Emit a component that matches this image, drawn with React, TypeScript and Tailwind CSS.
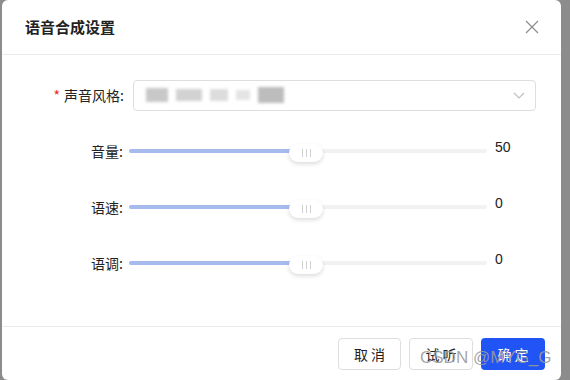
const FONT = { fontFamily: '"Noto Sans CJK SC", "Noto Sans", sans-serif' }

const SLIDERS = [
  { label: '音量', value: 50 },
  { label: '语速', value: 0 },
  { label: '语调', value: 0 },
]

function Slider() {
  return (
    <div className="relative flex h-[22px] w-[358px] items-center">
      <div className="h-[4px] w-full rounded-full bg-[#f2f2f2]" />
      <div className="absolute left-0 top-[9px] h-[4px] w-[166px] rounded-full bg-[#a6baee]" />
      <div className="absolute left-[160px] top-[4px] flex h-[18px] w-[34px] items-center justify-center gap-[3px] rounded-full bg-white shadow-[0_2px_4px_rgba(0,0,0,0.14)]">
        <span className="h-[8px] w-px bg-[#d0d0d0]" />
        <span className="h-[8px] w-px bg-[#d0d0d0]" />
        <span className="h-[8px] w-px bg-[#d0d0d0]" />
      </div>
    </div>
  )
}

export default function App() {
  return (
    <div className="relative flex h-[380px] w-[570px] bg-[#8c8c8c]" style={FONT}>
      <div className="ml-[2px] flex h-full w-[559px] flex-col rounded-[6px] bg-white text-[#222]">
        <div className="flex h-[55px] items-center justify-between border-b border-[#ebebeb] pl-[23px] pr-[22px]">
          <span className="text-[15px] font-bold">语音合成设置</span>
          <svg width="14" height="14" viewBox="0 0 14 14" className="text-[#8c8c8c]">
            <path d="M1 1L13 13M13 1L1 13" stroke="currentColor" strokeWidth="1.2" />
          </svg>
        </div>

        <div className="flex flex-1 flex-col gap-6 pt-[24px]">
          <div className="flex h-[32px] items-center">
            <div className="w-[123px] pr-[1px] text-right text-[14px]">
              <span className="mr-[4px] text-[#f5222d]">*</span>声音风格:
            </div>
            <div className="ml-[8px] flex h-[31px] w-[403px] items-center justify-between rounded-[4px] border border-[#dedede] pl-[12px] pr-[10px]">
              <div className="flex items-center gap-[8px] blur-[1.5px]">
                <div className="h-[14px] w-[22px] bg-[#c8c8c8]" />
                <div className="h-[12px] w-[26px] bg-[#d2d2d2]" />
                <div className="h-[12px] w-[18px] bg-[#dcdcdc]" />
                <div className="h-[10px] w-[14px] bg-[#e4e4e4]" />
                <div className="h-[16px] w-[26px] bg-[#bdbdbd]" />
              </div>
              <svg width="12" height="12" viewBox="0 0 12 12" className="text-[#bfbfbf]">
                <path d="M1 4L6 9L11 4" fill="none" stroke="currentColor" strokeWidth="1.1" />
              </svg>
            </div>
          </div>

          {SLIDERS.map((s) => (
            <div key={s.label} className="flex h-[32px] items-center">
              <div className="w-[123px] pr-[2px] text-right text-[14px]">{s.label}:</div>
              <div className="ml-[4px]">
                <Slider />
              </div>
              <span className="ml-[8px] -mt-[8px] text-[14px] text-[#222]" style={{ fontFamily: '"Liberation Sans", sans-serif' }}>
                {s.value}
              </span>
            </div>
          ))}
        </div>

        <div className="flex h-[54px] items-start justify-end gap-2 border-t border-[#ebebeb] pr-[16px] pt-[11px]">
          <button className="h-[32px] w-[63px] rounded-[4px] border border-[#dedede] bg-white text-[14px] text-[#222]">取 消</button>
          <button className="h-[32px] w-[64px] rounded-[4px] border border-[#dedede] bg-white text-[14px] text-[#222]">试 听</button>
          <button className="h-[32px] w-[64px] rounded-[4px] bg-[#2154f4] text-[14px] text-white">确 定</button>
        </div>
      </div>

      <div
        className="pointer-events-none absolute left-[420px] top-[349px] text-[17px] leading-none text-[#9a9a9a]/90"
        style={{ fontFamily: '"Liberation Sans", sans-serif' }}
      >
        CSDN @MYG_G
      </div>
    </div>
  )
}
